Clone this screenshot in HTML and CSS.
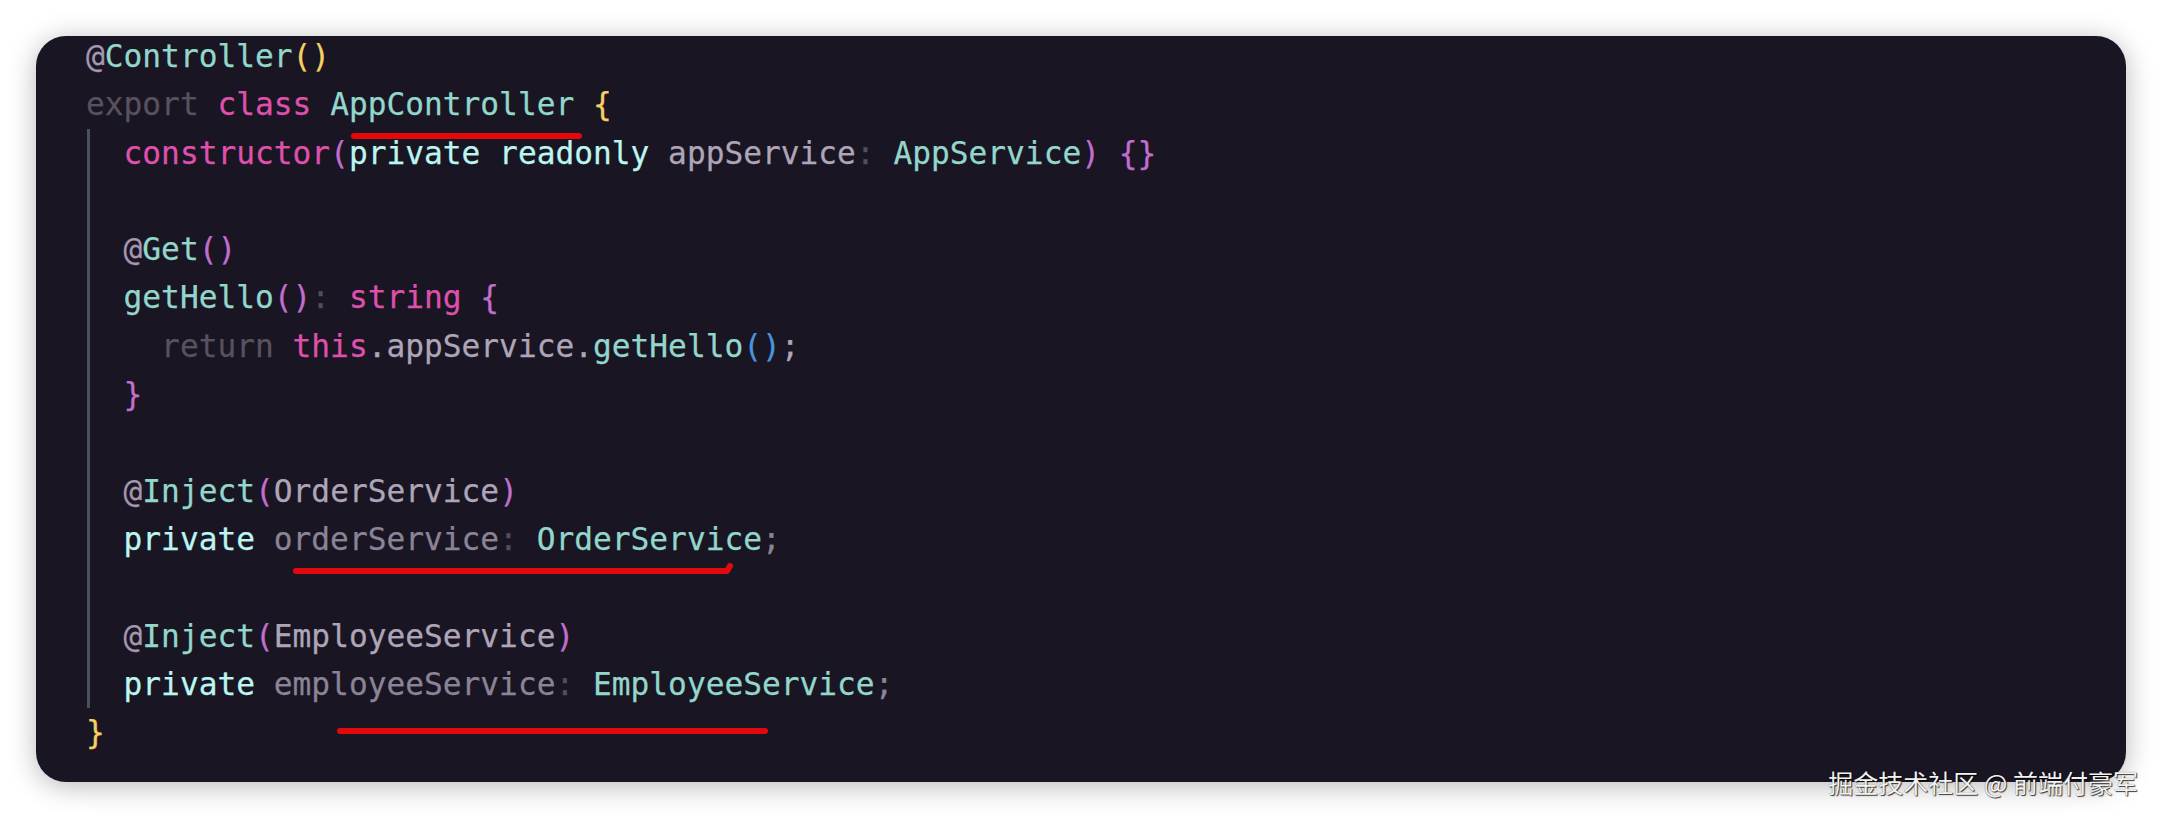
FILE: index.html
```html
<!DOCTYPE html>
<html lang="zh">
<head>
<meta charset="utf-8">
<title>AppController</title>
<link rel="stylesheet" href="styles.css">
</head>
<body>
<div class="page">
  <div class="card">
    <div class="code">
      <div class="ln"><span class="at">@</span><span class="t">Controller</span><span class="y">()</span></div>
      <div class="ln"><span class="dim">export</span> <span class="k">class</span> <span class="t">AppController</span> <span class="y">{</span></div>
      <div class="block">
        <div class="ln">  <span class="k">constructor</span><span class="p">(</span><span class="c">private</span> <span class="c">readonly</span> <span class="v">appService</span><span class="pn">:</span> <span class="t">AppService</span><span class="p">)</span> <span class="p">{}</span></div>
        <div class="ln"> </div>
        <div class="ln">  <span class="at">@</span><span class="t">Get</span><span class="p">()</span></div>
        <div class="ln">  <span class="t">getHello</span><span class="p">()</span><span class="pn">:</span> <span class="k">string</span> <span class="p">{</span></div>
        <div class="ln">    <span class="dim">return</span> <span class="k">this</span><span class="v">.appService.</span><span class="t">getHello</span><span class="b">()</span><span class="v">;</span></div>
        <div class="ln">  <span class="p">}</span></div>
        <div class="ln"> </div>
        <div class="ln">  <span class="at">@</span><span class="t">Inject</span><span class="p">(</span><span class="v">OrderService</span><span class="p">)</span></div>
        <div class="ln">  <span class="c">private</span> <span class="pr">orderService</span><span class="pn">:</span> <span class="t">OrderService</span><span class="pr">;</span></div>
        <div class="ln"> </div>
        <div class="ln">  <span class="at">@</span><span class="t">Inject</span><span class="p">(</span><span class="v">EmployeeService</span><span class="p">)</span></div>
        <div class="ln">  <span class="c">private</span> <span class="pr">employeeService</span><span class="pn">:</span> <span class="t">EmployeeService</span><span class="pr">;</span></div>
      </div>
      <div class="ln"><span class="y">}</span></div>
    </div>
    <svg class="marks" width="2090" height="746" viewBox="0 0 2090 746">
      <path d="M318 100 L543 100" />
      <path d="M260 535 L691 535 L694 530" />
      <path d="M304 695 L729 695" />
    </svg>
  </div>
  <div class="watermark">掘金技术社区 @ 前端付豪军</div>
</div>
</body>
</html>
```

FILE: styles.css
```css
html, body {
  margin: 0;
  padding: 0;
  background: #ffffff;
}

.page {
  position: relative;
  width: 2162px;
  height: 818px;
  padding: 36px 0 0 36px;
  box-sizing: border-box;
  overflow: hidden;
}

.card {
  position: relative;
  width: 2090px;
  height: 746px;
  background: #191522;
  border-radius: 30px;
  box-shadow: 0 4px 28px rgba(0, 0, 0, 0.28);
  overflow: hidden;
}

.code {
  margin-top: -4px;
  padding-left: 50px;
  font-family: "DejaVu Sans Mono", "Liberation Mono", monospace;
  font-size: 31.2px;
  line-height: 48.3px;
  color: #a9a0b3;
  -webkit-text-stroke: 0.25px currentColor;
}

.ln {
  white-space: pre;
  height: 48.3px;
}

.block {
  position: relative;
}

.block::before {
  content: "";
  position: absolute;
  left: 1px;
  top: 0;
  bottom: 0;
  width: 3px;
  background: #4a515d;
}

.at { color: #a697b1; }
.t { color: #93d6cc; }
.y { color: #f6d064; }
.k { color: #df50ac; }
.p { color: #c26ecf; }
.b { color: #4a93df; }
.c { color: #bcf5f1; }
.v { color: #aea5b8; }
.pr { color: #8b8396; }
.pn { color: #544d5c; }
.dim { color: #58515f; }

.marks {
  position: absolute;
  left: 0;
  top: 0;
  fill: none;
  stroke: #e3080b;
  stroke-width: 6;
  stroke-linecap: round;
  stroke-linejoin: round;
}

.watermark {
  position: absolute;
  right: 24px;
  top: 765px;
  font-family: "Noto Sans CJK SC", "Noto Sans", sans-serif;
  font-size: 25px;
  line-height: 34px;
  color: #f2f2f2;
  text-shadow: 1px 1px 1px rgba(0, 0, 0, 0.75), 0 0 1px rgba(0, 0, 0, 0.6);
}
```
